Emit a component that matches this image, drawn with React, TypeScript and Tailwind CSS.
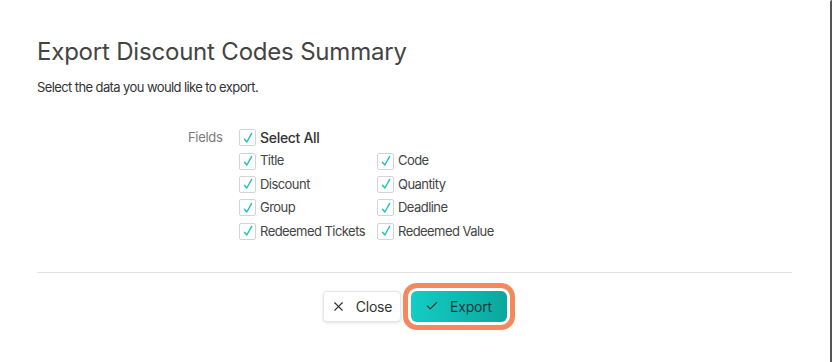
import { X, Check } from 'lucide-react';

const leftFields = ['Title', 'Discount', 'Group', 'Redeemed Tickets'];
const rightFields = ['Code', 'Quantity', 'Deadline', 'Redeemed Value'];

function Box() {
  return (
    <span className="flex h-[17px] w-[17px] shrink-0 items-center justify-center rounded-[2px] border border-[#d4d4d4] bg-white">
      <svg viewBox="0 0 16 16" className="h-[14px] w-[14px]" fill="none">
        <path d="M4 9.4 L6.7 12.6 L12.2 2.8" stroke="#1cc3bb" strokeWidth="1.6" strokeLinecap="round" strokeLinejoin="round" />
      </svg>
    </span>
  );
}

function Field({ label }: { label: string }) {
  return (
    <div className="flex items-center gap-[4px] h-[23.4px]">
      <Box />
      <span className="text-[13px] text-[#444] tracking-[-0.55px]">{label}</span>
    </div>
  );
}

export default function App() {
  return (
    <div className="h-[362px] w-[832px] bg-white flex" style={{ fontFamily: 'Inter, "Noto Sans", sans-serif' }}>
      <div className="flex-1 flex flex-col pl-[37px] pr-[38px] pt-[37px]">
        <h1 className="text-[24px] leading-[30px] text-[#444] tracking-[-0.2px]">Export Discount Codes Summary</h1>
        <p className="mt-[11px] text-[13px] leading-[18px] text-[#333] tracking-[-0.6px]">Select the data you would like to export.</p>

        <div className="mt-[30px] flex pl-[151px]">
          <span className="w-[51px] pt-[2px] text-[13px] leading-[18px] text-[#7a7a7a] tracking-[-0.3px]">Fields</span>
          <div className="flex flex-col">
            <div className="flex items-center gap-[4px] h-[23.4px]">
              <Box />
              <span className="text-[14px] font-medium text-[#333] tracking-[-0.3px]">Select All</span>
            </div>
            <div className="flex">
              <div className="flex flex-col w-[138px]">
                {leftFields.map((f) => (
                  <Field key={f} label={f} />
                ))}
              </div>
              <div className="flex flex-col">
                {rightFields.map((f) => (
                  <Field key={f} label={f} />
                ))}
              </div>
            </div>
          </div>
        </div>

        <div className="mt-[29px] h-px bg-[#e2e2e2]" />

        <div className="mt-[18px] flex justify-center gap-[10px]">
          <button className="flex h-[31px] w-[78px] items-center justify-center gap-[10px] rounded-[4px] border border-[#e6e6e6] bg-white text-[14px] text-[#333] tracking-[-0.2px] shadow-[0_1px_3px_rgba(0,0,0,0.12)]">
            <X className="h-[15px] w-[15px]" strokeWidth={1.8} />
            Close
          </button>
          <button className="flex h-[31px] w-[96px] items-center justify-center gap-[11px] rounded-[6px] bg-gradient-to-r from-[#14cdc4] to-[#0aa79d] text-[14px] text-[#1d3b3a] tracking-[-0.2px] ring-[5px] ring-[#f5895d] ring-offset-[3px] ring-offset-white">
            <Check className="h-[14px] w-[14px]" strokeWidth={2} />
            Export
          </button>
        </div>
      </div>
      <div className="w-[2px] bg-[#555] rounded-tl-[2px]" />
    </div>
  );
}
